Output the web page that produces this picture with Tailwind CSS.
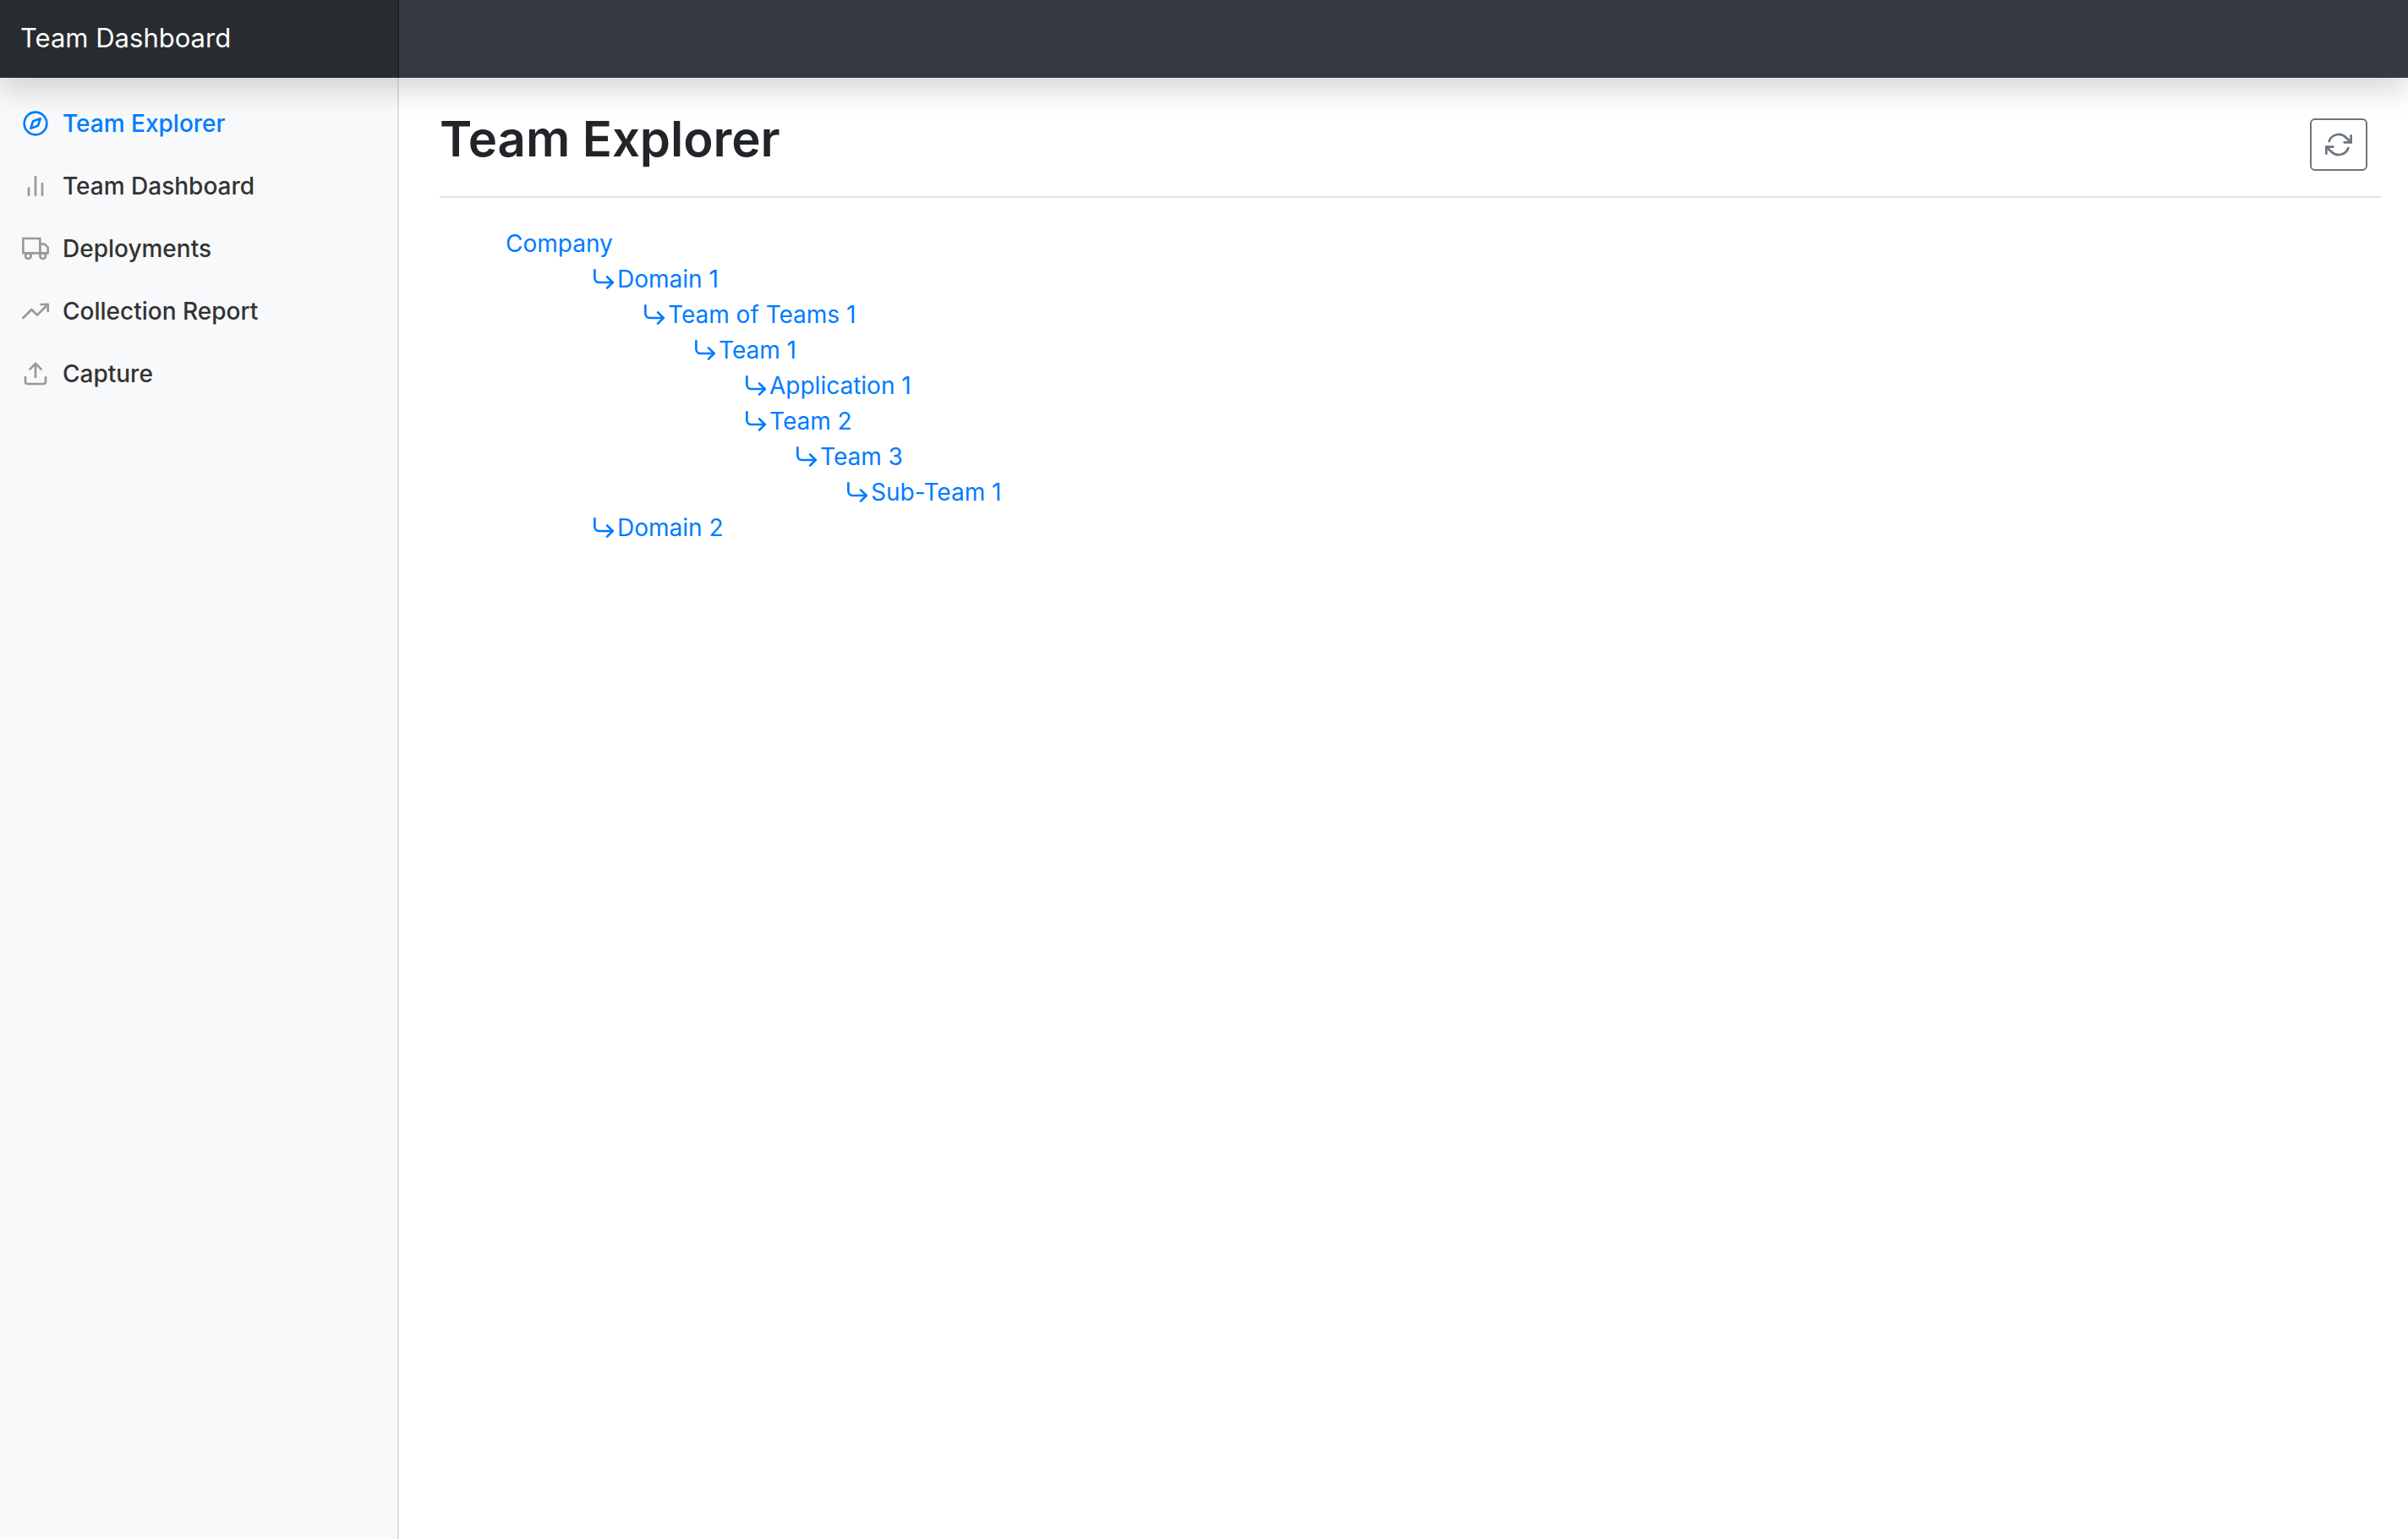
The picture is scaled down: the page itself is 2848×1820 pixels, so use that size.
<!DOCTYPE html>
<html lang="en">
<head>
<meta charset="utf-8">
<title>Team Explorer</title>
<script src="https://cdn.jsdelivr.net/npm/@tailwindcss/browser@4"></script>
</head>
<body class="flex min-h-screen flex-col bg-white font-[Inter,sans-serif] text-[28px] leading-[42px] text-[#212529]">
<svg class="hidden" aria-hidden="true">
  <symbol id="corner" viewBox="0 0 24 24"><polyline points="15 10 20 15 15 20"/><path d="M4 4v7a4 4 0 0 0 4 4h12"/></symbol>
</svg>

<header class="relative z-10 flex h-[92px] items-stretch bg-[#353941] shadow-[0_16px_32px_rgba(0,0,0,0.15)]">
  <a href="#" class="flex w-[472px] shrink-0 items-center border-r-2 border-[#1f2125] bg-[#282b30] px-6 pb-0.5 text-[31px] text-white">Team Dashboard</a>
</header>

<div class="flex flex-1">
  <nav class="w-[472px] shrink-0 border-r-2 border-[#dfe0e2] bg-[#f8f9fb] pt-[17px] font-medium text-[#333]">
    <ul>
      <li><a href="#" class="flex items-center gap-4 px-[26px] py-4 text-[#007bff]">
        <svg class="size-8 shrink-0 fill-none stroke-current stroke-2 [stroke-linecap:round] [stroke-linejoin:round]" viewBox="0 0 24 24"><circle cx="12" cy="12" r="10"/><polygon points="16.24 7.76 14.12 14.12 7.76 16.24 9.88 9.88 16.24 7.76"/></svg>
        Team Explorer</a></li>
      <li><a href="#" class="flex items-center gap-4 px-[26px] py-4">
        <svg class="size-8 shrink-0 fill-none stroke-[#999] stroke-2 [stroke-linecap:round] [stroke-linejoin:round]" viewBox="0 0 24 24"><path d="M18 20V10M12 20V4M6 20v-6"/></svg>
        Team Dashboard</a></li>
      <li><a href="#" class="flex items-center gap-4 px-[26px] py-4">
        <svg class="size-8 shrink-0 fill-none stroke-[#999] stroke-2 [stroke-linecap:round] [stroke-linejoin:round]" viewBox="0 0 24 24"><rect x="1" y="3" width="15" height="13"/><polygon points="16 8 20 8 23 11 23 16 16 16 16 8"/><circle cx="5.5" cy="18.5" r="2.5"/><circle cx="18.5" cy="18.5" r="2.5"/></svg>
        Deployments</a></li>
      <li><a href="#" class="flex items-center gap-4 px-[26px] py-4">
        <svg class="size-8 shrink-0 fill-none stroke-[#999] stroke-2 [stroke-linecap:round] [stroke-linejoin:round]" viewBox="0 0 24 24"><polyline points="23 6 13.5 15.5 8.5 10.5 1 18"/><polyline points="17 6 23 6 23 12"/></svg>
        Collection Report</a></li>
      <li><a href="#" class="flex items-center gap-4 px-[26px] py-4">
        <svg class="size-8 shrink-0 fill-none stroke-[#999] stroke-2 [stroke-linecap:round] [stroke-linejoin:round]" viewBox="0 0 24 24"><path d="M21 15v4a2 2 0 0 1-2 2H5a2 2 0 0 1-2-2v-4"/><polyline points="17 8 12 3 7 8"/><line x1="12" y1="3" x2="12" y2="15"/></svg>
        Capture</a></li>
    </ul>
  </nav>

  <main class="min-w-0 flex-1 pt-8 pr-8 pl-12">
    <div class="flex items-start justify-between border-b-2 border-[#dee2e6] pb-7">
      <h1 class="text-[58px] font-semibold leading-[80px]">Team Explorer</h1>
      <button type="button" aria-label="Refresh" class="mt-4 mr-4 flex h-[62px] w-[68px] items-center justify-center rounded-md border-2 border-[#6c757d] text-[#6c757d]">
        <svg class="size-8 fill-none stroke-current stroke-2 [stroke-linecap:round] [stroke-linejoin:round]" viewBox="0 0 24 24"><polyline points="23 4 23 10 17 10"/><polyline points="1 20 1 14 7 14"/><path d="M3.51 9a9 9 0 0 1 14.85-3.36L23 10M1 14l4.64 4.36A9 9 0 0 0 20.49 15"/></svg>
      </button>
    </div>

    <ul class="mt-[33px] pl-[78px] text-[#007bff] [&_svg]:size-8 [&_svg]:fill-none [&_svg]:stroke-current [&_svg]:stroke-2 [&_svg]:[stroke-linecap:round] [&_svg]:[stroke-linejoin:round]">
      <li><a href="#">Company</a>
        <ul class="pl-[100px]">
          <li><a href="#" class="flex w-fit items-center"><svg><use href="#corner"/></svg>Domain 1</a>
            <ul class="pl-[60px]">
              <li><a href="#" class="flex w-fit items-center"><svg><use href="#corner"/></svg>Team of Teams 1</a>
                <ul class="pl-[60px]">
                  <li><a href="#" class="flex w-fit items-center"><svg><use href="#corner"/></svg>Team 1</a>
                    <ul class="pl-[60px]">
                      <li><a href="#" class="flex w-fit items-center"><svg><use href="#corner"/></svg>Application 1</a></li>
                      <li><a href="#" class="flex w-fit items-center"><svg><use href="#corner"/></svg>Team 2</a>
                        <ul class="pl-[60px]">
                          <li><a href="#" class="flex w-fit items-center"><svg><use href="#corner"/></svg>Team 3</a>
                            <ul class="pl-[60px]">
                              <li><a href="#" class="flex w-fit items-center"><svg><use href="#corner"/></svg>Sub-Team 1</a></li>
                            </ul>
                          </li>
                        </ul>
                      </li>
                    </ul>
                  </li>
                </ul>
              </li>
            </ul>
          </li>
          <li><a href="#" class="flex w-fit items-center"><svg><use href="#corner"/></svg>Domain 2</a></li>
        </ul>
      </li>
    </ul>
  </main>
</div>
</body>
</html>
